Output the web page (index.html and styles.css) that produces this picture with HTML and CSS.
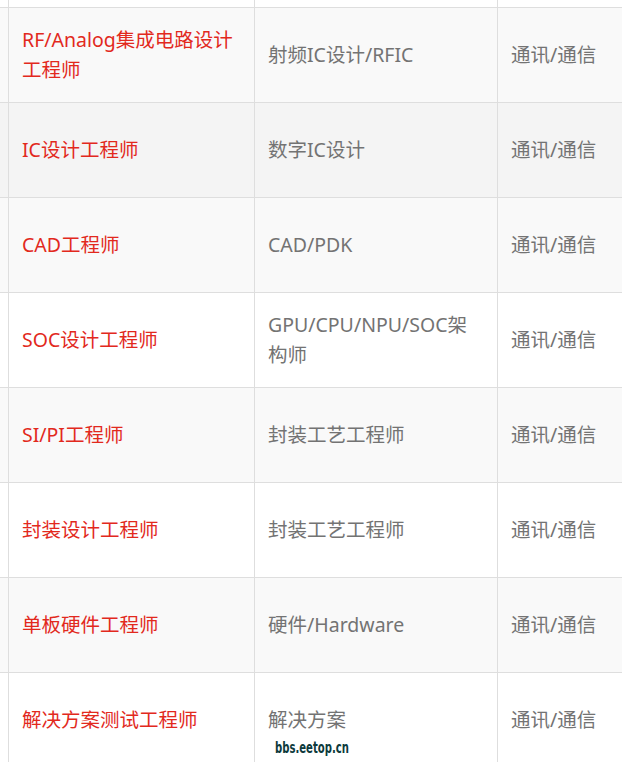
FILE: index.html
```html
<!DOCTYPE html>
<html lang="zh-CN">
<head>
<meta charset="utf-8">
<link rel="stylesheet" href="styles.css">
</head>
<body>
<div class="page">
<table class="jobs">
  <colgroup><col class="c0"><col class="c1"><col class="c2"><col class="c3"></colgroup>
  <tr class="top"><td></td><td></td><td></td><td></td></tr>
  <tr class="alt"><td></td><td class="name">RF/Analog集成电路设计工程师</td><td>射频IC设计/RFIC</td><td>通讯/通信</td></tr>
  <tr class="hover"><td></td><td class="name">IC设计工程师</td><td>数字IC设计</td><td>通讯/通信</td></tr>
  <tr class="alt"><td></td><td class="name">CAD工程师</td><td>CAD/PDK</td><td>通讯/通信</td></tr>
  <tr><td></td><td class="name">SOC设计工程师</td><td>GPU/CPU/NPU/SOC架构师</td><td>通讯/通信</td></tr>
  <tr class="alt"><td></td><td class="name">SI/PI工程师</td><td>封装工艺工程师</td><td>通讯/通信</td></tr>
  <tr><td></td><td class="name">封装设计工程师</td><td>封装工艺工程师</td><td>通讯/通信</td></tr>
  <tr class="alt"><td></td><td class="name">单板硬件工程师</td><td>硬件/Hardware</td><td>通讯/通信</td></tr>
  <tr><td></td><td class="name">解决方案测试工程师</td><td>解决方案</td><td>通讯/通信</td></tr>
</table>
<div class="mark">bbs.eetop.cn</div>
</div>
</body>
</html>
```
FILE: styles.css
```css
html, body {
  margin: 0;
  padding: 0;
  background: #fff;
}
.page {
  position: relative;
  width: 622px;
  height: 762px;
  overflow: hidden;
}
.jobs {
  border-collapse: collapse;
  table-layout: fixed;
  width: 760px;
  margin-left: -1px;
  margin-top: -1px;
  font-family: "Noto Sans", "Noto Sans CJK SC", sans-serif;
  font-size: 19.5px;
  line-height: 30px;
  color: #737373;
}
.c0 { width: 9px; }
.c1 { width: 246px; }
.c2 { width: 243px; }
.c3 { width: 262px; }
.jobs td {
  border: 1px solid #dedede;
  height: 95px;
  padding: 0 13px;
  vertical-align: middle;
  box-sizing: border-box;
}
.jobs tr td:first-child { padding: 0; }
.jobs tr.top td {
  height: 8px;
}
.jobs tr.alt td { background: #f9f9f9; }
.jobs tr.hover td { background: #f4f4f4; }
.jobs td.name { color: #e2291d; }
.mark {
  position: absolute;
  left: 275px;
  top: 738px;
  font-family: "DejaVu Sans Condensed", "DejaVu Sans", sans-serif;
  font-weight: bold;
  font-size: 16px;
  color: #0d3a3c;
  transform: scaleX(0.7);
  transform-origin: left top;
}
```
